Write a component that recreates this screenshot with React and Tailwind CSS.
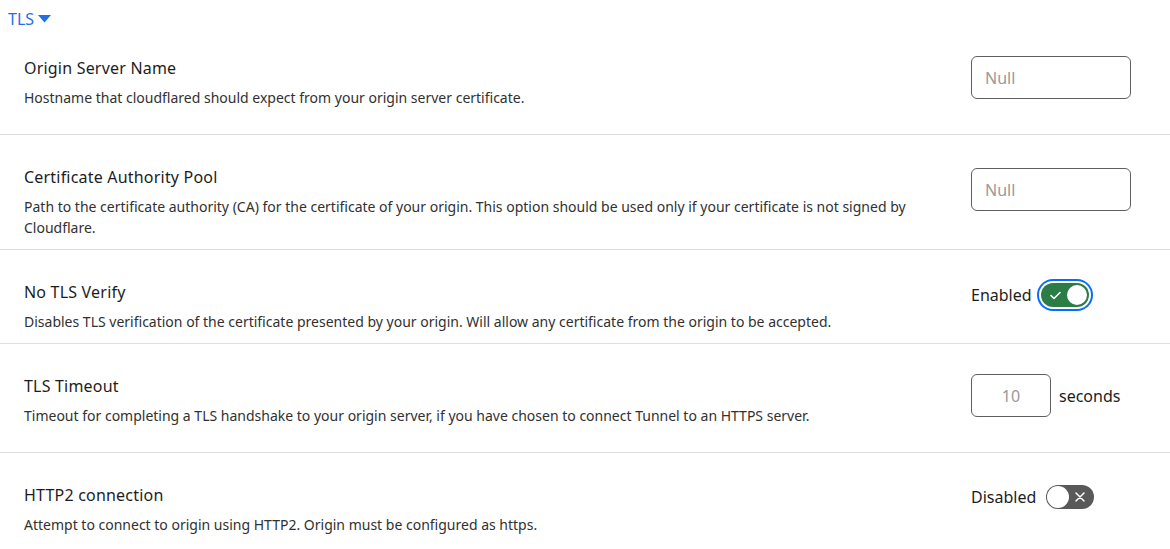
import React from "react";

const font = { fontFamily: '"Noto Sans", "Open Sans", sans-serif' };

function NullInput({ className = "" }) {
  return (
    <div className={"pb-[24px] " + className}>
      <div className="w-[160px] h-[43px] rounded-[6px] border border-[#5f5f5f] flex items-center pl-[13px] text-[16px] text-[#999999]">
        Null
      </div>
    </div>
  );
}

function Row({ title, desc, right, last, descClass = "" }) {
  return (
    <div className={"flex items-start pt-[30px] pb-[11px] pl-[24px] " + (last ? "" : "border-b border-[#dedede]")}>
      <div className="flex-1 min-w-0">
        <div className="text-[16px] leading-[24px] text-[#1d1d1d] tracking-[0.2px]">{title}</div>
        <div className={"mt-[7px] text-[14px] leading-[21px] text-[#313131] " + descClass}>{desc}</div>
      </div>
      <div className="w-[199px] shrink-0 flex">{right}</div>
    </div>
  );
}

export default function App() {
  return (
    <div className="w-[1170px] h-[549px] bg-white overflow-hidden" style={font}>
      <div className="pl-[8px] h-[26px] flex items-start">
        <span className="mt-[7px] flex items-center gap-[4px] text-[16px] leading-[24px] text-[#1f6feb]">
          TLS
          <svg width="13" height="8" viewBox="0 0 13 8">
            <path d="M0 0 H13 L6.5 7.5 Z" fill="#1f6feb" />
          </svg>
        </span>
      </div>
      <Row
        title="Origin Server Name"
        desc="Hostname that cloudflared should expect from your origin server certificate."
        right={<NullInput />}
      />
      <Row
        title="Certificate Authority Pool"
        desc="Path to the certificate authority (CA) for the certificate of your origin. This option should be used only if your certificate is not signed by Cloudflare."
        descClass="max-w-[900px]"
        right={<NullInput className="mt-[3px]" />}
      />
      <Row
        title="No TLS Verify"
        desc="Disables TLS verification of the certificate presented by your origin. Will allow any certificate from the origin to be accepted."
        right={
          <div className="flex items-center h-[32px] -mt-[1px] gap-[9px] text-[16px] text-[#1d1d1d]">
            <span>Enabled</span>
            <div className="w-[48px] h-[24px] rounded-full bg-[#2c7c45] ring-2 ring-[#0a6cff] ring-offset-2 flex items-center justify-between pl-[9px] pr-[2px]">
              <svg width="11" height="9" viewBox="0 0 11 9">
                <path d="M1 4.5 L4 7.5 L10 1.5" stroke="white" strokeWidth="1.6" fill="none" strokeLinecap="round" strokeLinejoin="round" />
              </svg>
              <div className="w-[20px] h-[20px] rounded-full bg-white" />
            </div>
          </div>
        }
      />
      <Row
        title="TLS Timeout"
        desc="Timeout for completing a TLS handshake to your origin server, if you have chosen to connect Tunnel to an HTTPS server."
        right={
          <div className="pb-[24px] flex items-center gap-[8px]">
            <div className="w-[80px] h-[43px] rounded-[6px] border border-[#5f5f5f] flex items-center justify-center text-[16px] text-[#999999]">
              10
            </div>
            <span className="text-[16px] text-[#1d1d1d]">seconds</span>
          </div>
        }
      />
      <Row
        last
        title="HTTP2 connection"
        desc="Attempt to connect to origin using HTTP2. Origin must be configured as https."
        right={
          <div className="flex items-center h-[24px] mt-[2px] gap-[10px] text-[16px] text-[#1d1d1d]">
            <span>Disabled</span>
            <div className="w-[48px] h-[24px] rounded-full bg-[#595959] flex items-center justify-between pl-[1px] pr-[9px]">
              <div className="w-[22px] h-[22px] rounded-full bg-white" />
              <svg width="10" height="10" viewBox="0 0 10 10">
                <path d="M1 1 L9 9 M9 1 L1 9" stroke="white" strokeWidth="1.5" strokeLinecap="round" />
              </svg>
            </div>
          </div>
        }
      />
    </div>
  );
}
